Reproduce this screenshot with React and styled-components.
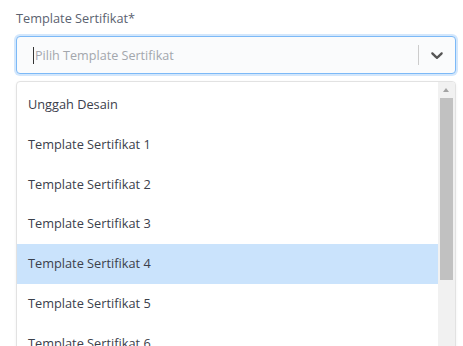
import React, { useState } from 'react';
import styled, { createGlobalStyle } from 'styled-components';

const GlobalStyle = createGlobalStyle`
	html, body {
		margin: 0;
		padding: 0;
		overflow: hidden;
		background: #fff;
	}
	body {
		font-family: "Open Sans", "Noto Sans", sans-serif;
	}
`

const Field = styled.div`
	box-sizing: border-box;
	padding: 8px 7px 0 16px;
	width: 463px;
	height: 346px;
`

const Label = styled.label`
	display: block;
	font-size: 12.75px;
	line-height: 20px;
	color: #5b6270;
	margin-bottom: 8px;
`

const Control = styled.div`
	box-sizing: border-box;
	display: flex;
	align-items: center;
	height: 38px;
	background: #fafbfc;
	border: 1px solid #7cb9f7;
	border-radius: 4px;
	box-shadow: 0 0 0 2px #d3e7fc;
`

const ValueBox = styled.div`
	flex: 1;
	display: flex;
	align-items: center;
	padding-left: 16px;
	font-size: 12.6px;
	color: #a3a7ad;
	>.caret {
		width: 1px;
		height: 17px;
		background: #333;
		margin-right: 1px;
	}
`

const Separator = styled.span`
	width: 1px;
	height: 20px;
	background: #cccccc;
`

const Indicator = styled.div`
	display: flex;
	padding: 0 8px 0 8px;
	color: #555;
`

const Menu = styled.div`
	box-sizing: border-box;
	display: flex;
	margin-top: 7px;
	height: 300px;
	border: 1px solid #e2e2e2;
	border-radius: 4px;
	box-shadow: 0 1px 3px rgba(0,0,0,.06);
	background: #fff;
	overflow: hidden;
`

const OptionList = styled.div`
	flex: 1;
	padding: 3px 0;
	overflow: hidden;
`

const Option = styled.div`
	padding: 10px 12px 10px 11px;
	line-height: 19.75px;
	font-size: 12.75px;
	color: #3b404b;
	background: ${p => p.$active ? '#cae3fc' : 'transparent'};
`

const ScrollTrack = styled.div`
	width: 17px;
	flex-shrink: 0;
	display: flex;
	flex-direction: column;
	background: #f1f1f1;
	>.up {
		height: 15px;
		display: flex;
		justify-content: center;
		align-items: center;
		&::before {
			content: '';
			width: 0;
			height: 0;
			margin-left: -1px;
			border-left: 3.5px solid transparent;
			border-right: 3.5px solid transparent;
			border-bottom: 4px solid #a3a3a3;
		}
	}
	>.thumb {
		margin: 1px 2px 0 2px;
		height: ${p => p.$thumb}px;
		background: #c1c1c1;
	}
`

const options = ['Unggah Desain', ...Array.from({ length: 10 }, (_, i) => `Template Sertifikat ${i + 1}`)];

const App = () => {
	const [hoverIdx, setHoverIdx] = useState(4);

	return (
		<>
			<GlobalStyle />
			<Field>
				<Label>Template Sertifikat*</Label>
				<Control>
					<ValueBox>
						<span className='caret' />
						Pilih Template Sertifikat
					</ValueBox>
					<Separator />
					<Indicator>
						<svg width="20" height="20" viewBox="0 0 20 20" fill="currentColor">
							<path d="M4.516 7.548c0.436-0.446 1.043-0.481 1.576 0l3.908 3.747 3.908-3.747c0.533-0.481 1.141-0.446 1.574 0 0.436 0.445 0.408 1.197 0 1.615-0.406 0.418-4.695 4.502-4.695 4.502-0.217 0.223-0.502 0.335-0.787 0.335s-0.57-0.112-0.789-0.335c0 0-4.287-4.084-4.695-4.502s-0.436-1.17 0-1.615z" />
						</svg>
					</Indicator>
				</Control>
				<Menu>
					<OptionList>
						{options.map((item, key) => (
							<Option key={`opt-${key}`} $active={hoverIdx === key} onMouseEnter={() => setHoverIdx(key)}>
								{item}
							</Option>
						))}
					</OptionList>
					<ScrollTrack $thumb={182}>
						<div className='up' />
						<div className='thumb' />
					</ScrollTrack>
				</Menu>
			</Field>
		</>
	);
}

export default App;
